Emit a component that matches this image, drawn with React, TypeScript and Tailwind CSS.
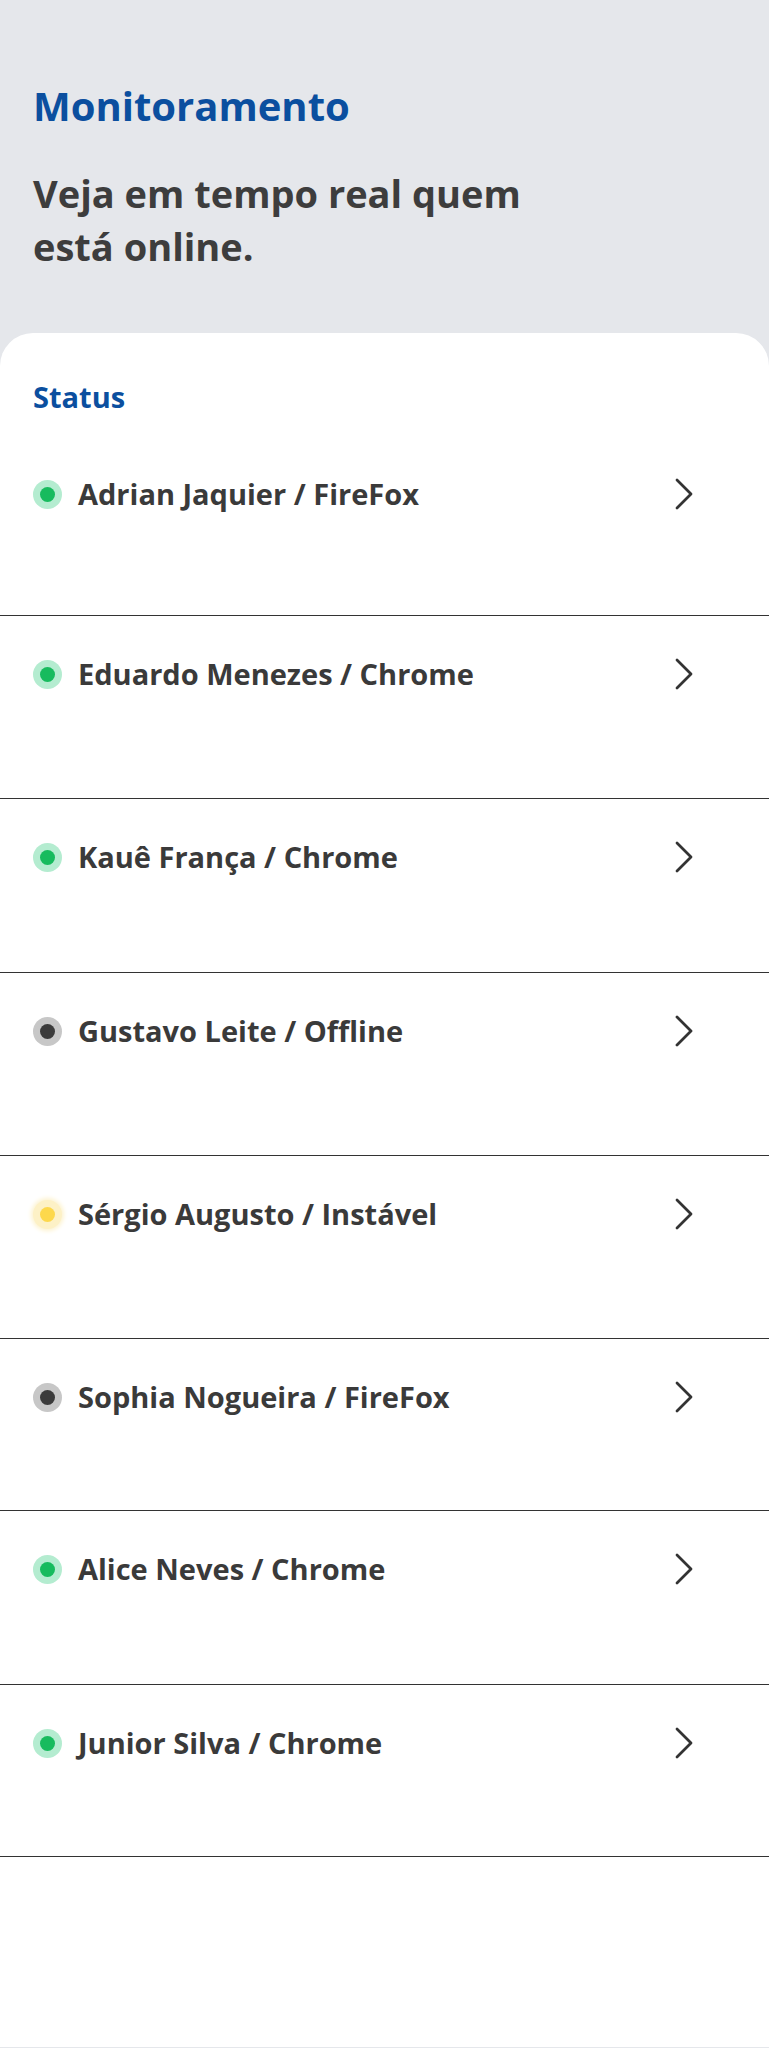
import React from "react";

type Status = "online" | "offline" | "unstable";

const rows: { label: string; status: Status; h: string }[] = [
  { label: "Adrian Jaquier / FireFox", status: "online", h: "h-[180px]" },
  { label: "Eduardo Menezes / Chrome", status: "online", h: "h-[183px]" },
  { label: "Kauê França / Chrome", status: "online", h: "h-[174px]" },
  { label: "Gustavo Leite / Offline", status: "offline", h: "h-[183px]" },
  { label: "Sérgio Augusto / Instável", status: "unstable", h: "h-[183px]" },
  { label: "Sophia Nogueira / FireFox", status: "offline", h: "h-[172px]" },
  { label: "Alice Neves / Chrome", status: "online", h: "h-[174px]" },
  { label: "Junior Silva / Chrome", status: "online", h: "h-[172px]" },
];

function Dot({ status }: { status: Status }) {
  if (status === "online") {
    return (
      <span className="flex h-[29px] w-[29px] shrink-0 items-center justify-center rounded-full bg-[#b4ecd0]">
        <span className="h-[15px] w-[15px] rounded-full bg-[#17bb5e]" />
      </span>
    );
  }
  if (status === "offline") {
    return (
      <span className="flex h-[29px] w-[29px] shrink-0 items-center justify-center rounded-full bg-[#c7c7c7]">
        <span className="h-[15px] w-[15px] rounded-full bg-[#3b3b3b]" />
      </span>
    );
  }
  return (
    <span className="flex h-[29px] w-[29px] shrink-0 items-center justify-center rounded-full bg-[#fdf1c6] shadow-[0_0_4px_2px_#fdf3d0]">
      <span className="h-[15px] w-[15px] rounded-full bg-[#fdd84c]" />
    </span>
  );
}

function Chevron() {
  return (
    <svg width="18" height="32" viewBox="0 0 18 32" fill="none" className="shrink-0">
      <path d="M2 2 L16 16 L2 30" stroke="#333333" strokeWidth="2.8" strokeLinecap="round" strokeLinejoin="round" />
    </svg>
  );
}

export default function App() {
  return (
    <div className="min-h-[2048px] bg-[#e5e7eb] font-['Open_Sans',_'Noto_Sans',_sans-serif]">
      <header className="px-[33px] pt-[78px] pb-[60px]">
        <h1 className="text-[40px] font-bold leading-[56px] text-[#0b4f9f]">Monitoramento</h1>
        <p className="mt-[33px] text-[38px] font-bold leading-[53px] text-[#3d3d3d]">
          Veja em tempo real quem
          <br />
          está online.
        </p>
      </header>
      <main className="min-h-[1714px] rounded-t-[33px] bg-white pt-[46px]">
        <h2 className="px-[33px] text-[29px] font-bold leading-[36px] text-[#0b4f9f]">Status</h2>
        <ul className="mt-[21px]">
          {rows.map((r) => (
            <li key={r.label} className={`${r.h} border-b border-[#333333] pt-[40px] pl-[33px] pr-[76px]`}>
              <div className="flex h-[36px] items-center">
                <Dot status={r.status} />
                <span className="ml-[16px] text-[29px] font-bold leading-[36px] text-[#3a3a3a]">{r.label}</span>
                <span className="ml-auto flex">
                  <Chevron />
                </span>
              </div>
            </li>
          ))}
        </ul>
      </main>
    </div>
  );
}
